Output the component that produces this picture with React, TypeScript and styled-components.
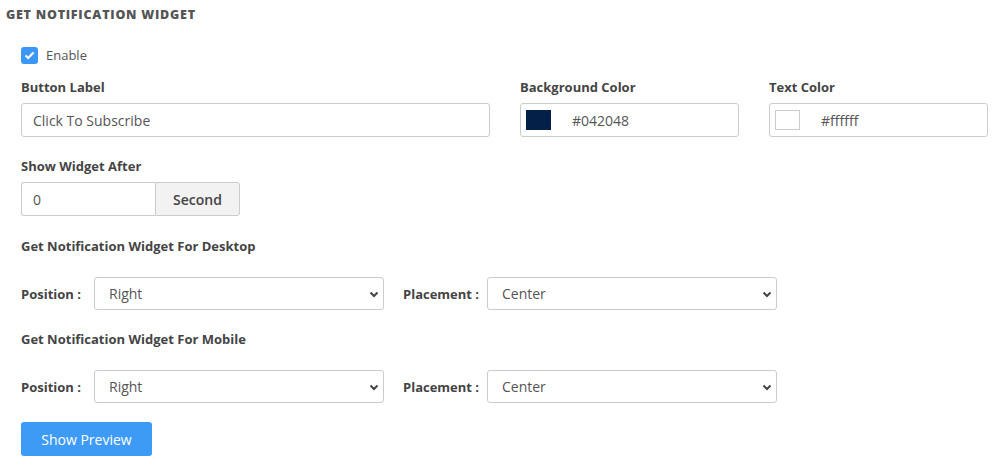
import React from "react";
import styled, { createGlobalStyle } from "styled-components";

const Global = createGlobalStyle`
  html, body { margin: 0; padding: 0; background: #fff; }
  body { font-family: "Open Sans", "Liberation Sans", sans-serif; color: #555; }
  * { box-sizing: border-box; }
`;

const Page = styled.div`
  width: 994px;
  height: 465px;
  overflow: hidden;
  padding: 8px 0 0 6px;
`;

const Title = styled.h2`
  margin: 0;
  font-family: "Open Sans", "Liberation Sans", sans-serif;
  font-size: 12.5px;
  font-weight: 800;
  color: #555;
  line-height: 14px;
  letter-spacing: 0.75px;
`;

const Form = styled.div`
  padding-left: 15px;
  display: flex;
  flex-direction: column;
`;

const CheckRow = styled.label`
  display: flex;
  align-items: center;
  gap: 8px;
  margin-top: 24px;
  font-size: 13px;
  color: #555;
  height: 18px;
`;

const Box = styled.span`
  width: 17px;
  height: 17px;
  border-radius: 3px;
  background: #3b97f5;
  display: flex;
  align-items: center;
  justify-content: center;
`;

const Grid = styled.div`
  display: grid;
  grid-template-columns: 469px 219px 219px;
  column-gap: 30px;
  margin-top: 14px;
`;

const Field = styled.div`
  display: flex;
  flex-direction: column;
`;

const Label = styled.div<{ $mb?: number }>`
  font-size: 13px;
  font-weight: 700;
  color: #444;
  line-height: 18px;
  margin-bottom: ${(p) => p.$mb ?? 7}px;
`;

const TextBox = styled.div<{ $w?: number }>`
  height: 34px;
  border: 1px solid #ccc;
  border-radius: 3px;
  display: flex;
  align-items: center;
  padding-left: 11px;
  font-size: 14px;
  color: #555;
  ${(p) => (p.$w ? `width: ${p.$w}px;` : "")}
`;

const ColorBox = styled(TextBox)`
  padding-left: 5px;
  gap: 21px;
`;

const Swatch = styled.span<{ $c: string }>`
  width: 25px;
  height: 20px;
  background: ${(p) => p.$c};
  border: 1px solid ${(p) => (p.$c === "#ffffff" ? "#ccc" : p.$c)};
`;

const Section = styled.div<{ $mt: number }>`
  margin-top: ${(p) => p.$mt}px;
`;

const Group = styled.div`
  display: flex;
  width: 219px;
  height: 34px;
`;

const GroupInput = styled.div`
  flex: 0 0 134px;
  border: 1px solid #ccc;
  border-right: none;
  border-radius: 3px 0 0 3px;
  display: flex;
  align-items: center;
  padding-left: 11px;
  font-size: 14px;
  color: #555;
`;

const Addon = styled.div`
  flex: 1;
  border: 1px solid #ccc;
  border-radius: 0 3px 3px 0;
  background: #f2f2f2;
  display: flex;
  align-items: center;
  justify-content: center;
  font-size: 14px;
  font-weight: 600;
  color: #444;
`;

const SubTitle = styled.div`
  font-size: 13px;
  font-weight: 700;
  color: #444;
  line-height: 18px;
`;

const SelRow = styled.div`
  display: flex;
  align-items: center;
  margin-top: 22px;
`;

const SelLabel = styled.span<{ $w: number; $pl?: number }>`
  width: ${(p) => p.$w}px;
  padding-left: ${(p) => p.$pl ?? 0}px;
  font-size: 13px;
  font-weight: 700;
  color: #444;
`;

const SelectWrap = styled.div`
  position: relative;
  width: 290px;
  height: 33px;
  border: 1px solid #ccc;
  border-radius: 3px;
  display: flex;
  align-items: center;
  padding-left: 14px;
  font-size: 14px;
  color: #555;
`;

const Chevron = styled.svg`
  position: absolute;
  right: 4px;
  top: 13px;
`;

const Button = styled.button`
  margin-top: 19px;
  width: 131px;
  height: 34px;
  border: none;
  border-radius: 3px;
  background: #3d9bf6;
  color: #fff;
  font-family: "Open Sans", "Liberation Sans", sans-serif;
  font-size: 14px;
  padding: 0;
`;

const Select = ({ value }: { value: string }) => (
  <SelectWrap>
    {value}
    <Chevron width="10" height="7" viewBox="0 0 10 7">
      <path d="M1.5 1.5 L5 5 L8.5 1.5" fill="none" stroke="#444" strokeWidth="2" />
    </Chevron>
  </SelectWrap>
);

const PosRow = () => (
  <SelRow>
    <SelLabel $w={73}>Position :</SelLabel>
    <Select value="Right" />
    <SelLabel $w={103} $pl={19}>Placement :</SelLabel>
    <Select value="Center" />
  </SelRow>
);

export default function App() {
  return (
    <Page>
      <Global />
      <Title>GET NOTIFICATION WIDGET</Title>
      <Form>
        <CheckRow>
          <Box>
            <svg width="11" height="9" viewBox="0 0 11 9">
              <path d="M1.5 4.5 L4.2 7 L9.5 1.5" fill="none" stroke="#fff" strokeWidth="2.2" />
            </svg>
          </Box>
          Enable
        </CheckRow>
        <Grid>
          <Field>
            <Label>Button Label</Label>
            <TextBox>Click To Subscribe</TextBox>
          </Field>
          <Field>
            <Label>Background Color</Label>
            <ColorBox>
              <Swatch $c="#042048" />
              #042048
            </ColorBox>
          </Field>
          <Field>
            <Label>Text Color</Label>
            <ColorBox>
              <Swatch $c="#ffffff" />
              #ffffff
            </ColorBox>
          </Field>
        </Grid>
        <Section $mt={20}>
          <Label>Show Widget After</Label>
          <Group>
            <GroupInput>0</GroupInput>
            <Addon>Second</Addon>
          </Group>
        </Section>
        <Section $mt={21}>
          <SubTitle>Get Notification Widget For Desktop</SubTitle>
          <PosRow />
        </Section>
        <Section $mt={20}>
          <SubTitle>Get Notification Widget For Mobile</SubTitle>
          <PosRow />
        </Section>
        <Button>Show Preview</Button>
      </Form>
    </Page>
  );
}
